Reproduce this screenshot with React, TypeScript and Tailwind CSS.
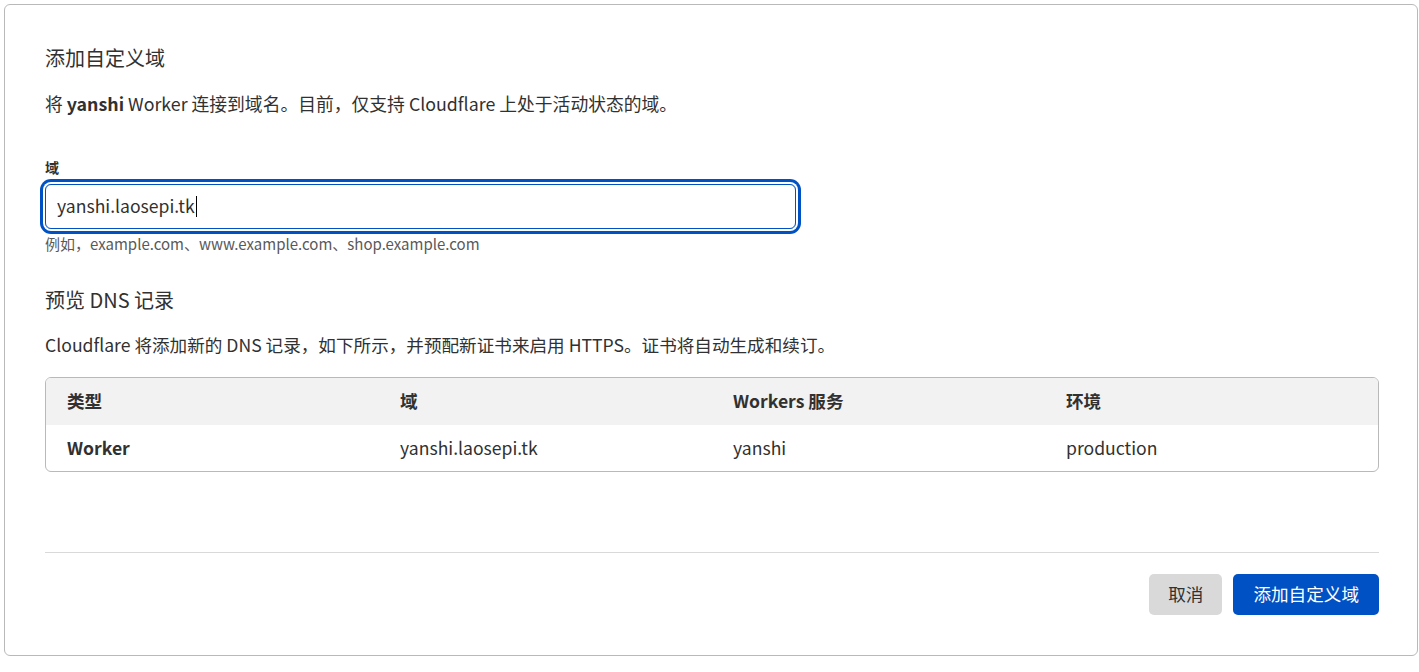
import React from "react";

const font = { fontFamily: '"Noto Sans CJK SC", sans-serif' };

export default function App() {
  return (
    <div className="min-h-[672px] w-[1419px] bg-white pt-[4px] pl-[4px] text-[#313131]" style={font}>
      <div className="flex w-[1414px] flex-col rounded-[6px] border border-[#b9b9b9] pt-[39px] pr-[38px] pb-[40px] pl-[40px]">
        <h2 className="text-[20px] leading-[28px] font-normal">添加自定义域</h2>
        <p className="mt-[19px] text-[17.8px] leading-[24px]">
          将 <span className="font-bold">yanshi</span> Worker 连接到域名。目前，仅支持 Cloudflare 上处于活动状态的域。
        </p>

        <label className="mt-[43px] text-[14px] leading-[18px] font-bold">域</label>
        <div className="mt-[8px] flex h-[45px] w-[751px] items-center rounded-[6px] border border-[#0051c3] pl-[11px] text-[17.6px] shadow-[0_0_0_2px_#fff,0_0_0_5px_#0051c3]">
          <span>yanshi.laosepi.tk</span>
          <span className="ml-[1px] inline-block h-[21px] w-[1px] bg-[#000]" />
        </div>
        <p className="mt-[5px] text-[15px] leading-[20px] text-[#595959]">
          例如，example.com、www.example.com、shop.example.com
        </p>

        <h2 className="mt-[32px] text-[20px] leading-[28px] font-normal">预览 DNS 记录</h2>
        <p className="mt-[19px] text-[17.6px] leading-[24px]">
          Cloudflare 将添加新的 DNS 记录，如下所示，并预配新证书来启用 HTTPS。证书将自动生成和续订。
        </p>

        <div className="mt-[20px] overflow-hidden rounded-[6px] border border-[#b9b9b9]">
          <div className="grid h-[47px] grid-cols-4 items-center bg-[#f2f2f2] text-[17.6px] font-bold">
            <div className="pl-[21px]">类型</div>
            <div className="pl-[21px]">域</div>
            <div className="pl-[21px]">Workers 服务</div>
            <div className="pl-[21px]">环境</div>
          </div>
          <div className="grid h-[46px] grid-cols-4 items-center text-[17.6px]">
            <div className="pl-[21px] font-bold">Worker</div>
            <div className="pl-[21px]">yanshi.laosepi.tk</div>
            <div className="pl-[21px]">yanshi</div>
            <div className="pl-[21px]">production</div>
          </div>
        </div>

        <div className="mt-[80px] h-px bg-[#d9d9d9]" />

        <div className="mt-[21px] flex justify-end gap-[11px]">
          <button className="h-[41px] rounded-[5px] bg-[#d9d9d9] px-[19px] text-[17.6px] text-[#313131]">取消</button>
          <button className="h-[41px] rounded-[5px] bg-[#0051c3] px-[20px] text-[17.6px] text-white">添加自定义域</button>
        </div>
      </div>
    </div>
  );
}
